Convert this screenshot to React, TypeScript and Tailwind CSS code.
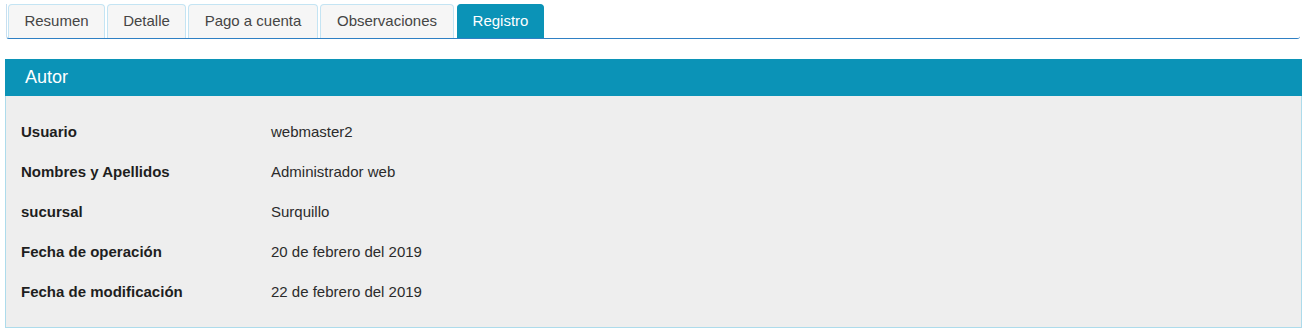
import React from "react";

const tabs: { t: string; w: string }[] = [
  { t: "Resumen", w: "w-[97px]" },
  { t: "Detalle", w: "w-[79px]" },
  { t: "Pago a cuenta", w: "w-[130px]" },
  { t: "Observaciones", w: "w-[134px]" },
  { t: "Registro", w: "w-[87px]" },
];
const rows: [string, string][] = [
  ["Usuario", "webmaster2"],
  ["Nombres y Apellidos", "Administrador web"],
  ["sucursal", "Surquillo"],
  ["Fecha de operación", "20 de febrero del 2019"],
  ["Fecha de modificación", "22 de febrero del 2019"],
];

export default function App() {
  return (
    <div className="w-[1308px] h-[333px] bg-white font-['Liberation_Sans',Arial,sans-serif] pt-[4px]">
      <div className="ml-[6px] mr-[8px] flex items-end gap-[2px] pl-[1px] border-b border-[#2f80c4] rounded-bl-[3px] rounded-br-[3px] border-l border-l-[#c8dff0]">
        {tabs.map(({ t, w }) => {
          const active = t === "Registro";
          return (
            <div
              key={t}
              className={
                active
                  ? `${w} ml-[1px] h-[34px] flex items-center justify-center text-[15px] rounded-t-[4px] border border-b-0 border-[#0b93b7] bg-[#0b93b7] text-white`
                  : `${w} h-[34px] flex items-center justify-center text-[15px] rounded-t-[4px] border border-b-0 border-[#c4e4f3] bg-[#f6f6f6] text-[#454545]`
              }
            >
              {t}
            </div>
          );
        })}
      </div>
      <div className="mt-[20px] ml-[5px] mr-[6px]">
        <div className="h-[37px] bg-[#0b93b7] pl-[20px] flex items-center text-white text-[18px]">Autor</div>
        <div className="bg-[#eeeeee] border border-t-0 border-[#addbeb] pt-[16px] pb-[15px] pl-[15px] text-[15px] text-[#1e1e1e]">
          {rows.map(([k, v]) => (
            <div key={k} className="h-[40px] flex items-center">
              <div className="w-[250px] font-bold">{k}</div>
              <div className="text-[#2b2b2b]">{v}</div>
            </div>
          ))}
        </div>
      </div>
    </div>
  );
}
